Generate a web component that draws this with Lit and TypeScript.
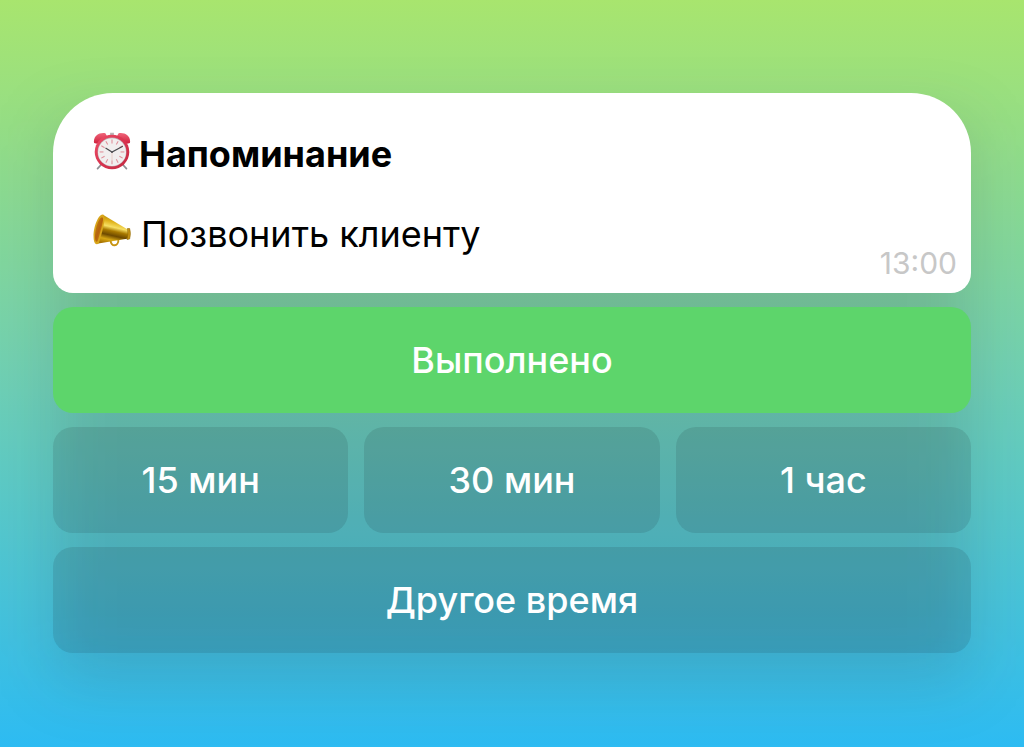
import { LitElement, html, css, svg } from "lit";
import { customElement } from "lit/decorators.js";

const ticks = Array.from({ length: 12 }, (_, i) => i * 30);

const alarmClock = html`
  <svg class="icon" viewBox="0 0 40 40" aria-hidden="true">
    <defs>
      <linearGradient id="bell" x1="0" y1="0" x2="0" y2="1">
        <stop offset="0" stop-color="#f0657a" />
        <stop offset="1" stop-color="#cf1f3c" />
      </linearGradient>
      <linearGradient id="rim" x1="0" y1="0" x2="1" y2="1">
        <stop offset="0" stop-color="#ee5069" />
        <stop offset="0.5" stop-color="#d93450" />
        <stop offset="1" stop-color="#c32a41" />
      </linearGradient>
    </defs>
    <path d="M8.500 34.500 4.800 38.600M31.500 34.500 35.200 38.600" stroke="#8d8f94" stroke-width="1.800" stroke-linecap="round" />
    <path d="M20 0.800v5" stroke="#b9b4b6" stroke-width="4" />
    <path d="M1.200 11.600C-.2 4.600 6 0 13 1.200L14.800 4.400 4.200 12.400Z" fill="url(#bell)" />
    <path d="M38.800 11.600C40.200 4.600 34 0 27 1.200L25.200 4.400 35.800 12.400Z" fill="url(#bell)" />
    <circle cx="20" cy="21" r="18.200" fill="url(#rim)" />
    <circle cx="20" cy="21" r="15.200" fill="#b8a9ae" />
    <circle cx="20" cy="21.200" r="14.700" fill="#f1eeee" />
    ${ticks.map(
      (a) => svg`<path d="M20 8v4" stroke="#e08d98" stroke-width="1.1" transform="rotate(${a} 20 21)" />`
    )}
    <path d="M20 21v10.500" stroke="#e6c4bd" stroke-width="0.800" />
    <path d="M13.200 16.800 20 21 31.400 15" fill="none" stroke="#4a4b4f" stroke-width="1.300" />
    <circle cx="20" cy="21" r="1.100" fill="#55565a" />
  </svg>
`;

const megaphone = html`
  <svg class="icon" viewBox="0 0 40 40" aria-hidden="true">
    <defs>
      <linearGradient id="horn" x1="0.600" y1="0" x2="0.350" y2="1">
        <stop offset="0" stop-color="#a87a00" />
        <stop offset="0.250" stop-color="#e0b31c" />
        <stop offset="0.420" stop-color="#f7df63" />
        <stop offset="0.550" stop-color="#a87900" />
        <stop offset="0.700" stop-color="#6e4a00" />
        <stop offset="0.850" stop-color="#d7a713" />
        <stop offset="1" stop-color="#a67200" />
      </linearGradient>
      <linearGradient id="mouth" x1="0" y1="0" x2="1" y2="1">
        <stop offset="0" stop-color="#c98d0c" />
        <stop offset="0.500" stop-color="#b5620d" />
        <stop offset="1" stop-color="#d99b12" />
      </linearGradient>
    </defs>
    <path d="M18.500 29.500c0 7.600 8.600 7.200 8.200-.6" fill="none" stroke="#c79412" stroke-width="2" />
    <path d="M10.500 3 36.500 18.400 37.400 28 4 33.500Z" fill="url(#horn)" />
    <path d="M36.200 17.400h2.400q1.600 5.200 0 11l-2.800.6q1.600-5.800.4-11.600Z" fill="#c59213" stroke="#8e6500" stroke-width="0.600" />
    <path d="M10.200 2.600C5.200 2.400-.6 18 .8 29.200 1.400 34.600 5.400 35 6.400 32.200 9 24 12 12.600 12.200 6.600 12.200 4 11.400 2.800 10.200 2.600Z" fill="#d8a51a" />
    <path d="M9.500 5.600C6 6 1.600 18.600 2.200 28.200 2.600 32.200 4.600 32 5.200 29.800 7.600 22 10.200 12.800 10.600 8 10.600 6.400 10.200 5.600 9.500 5.600Z" fill="url(#mouth)" />
  </svg>
`;

@customElement("app-root")
export class AppRoot extends LitElement {
  static styles = css`
    :host {
      display: block;
      box-sizing: border-box;
      min-height: 100vh;
      padding: 93px 53px;
      background: linear-gradient(#a8e56e, #70d0b3 50%, #2dbbf2);
      font-family: Inter, "Noto Sans", sans-serif;
      overflow: hidden;
    }
    .message {
      position: relative;
      display: grid;
      gap: 14px;
      isolation: isolate;
    }
    .message::before {
      content: "";
      position: absolute;
      z-index: -1;
      inset: 28px 0 -28px;
      border-radius: 20px;
      background: rgba(50, 30, 40, 0.14);
      filter: blur(32px);
    }
    .card {
      padding: 41px 14px 15px 40px;
      border-radius: 60px 60px 20px 20px;
      background: #fff;
      color: #000;
      font-size: 36px;
      line-height: 40px;
    }
    .title,
    .text {
      display: flex;
      gap: 8px;
      margin: 0;
      font-size: 36px;
      font-weight: 400;
    }
    .title {
      padding-bottom: 40px;
      font-weight: 700;
    }
    .text {
      gap: 10px;
      padding-bottom: 24px;
    }
    .icon {
      flex: none;
      width: 38px;
      height: 38px;
      margin-top: -2px;
    }
    .body {
      display: flex;
      justify-content: space-between;
      align-items: flex-end;
    }
    .time {
      color: #c7c7c7;
      font-size: 30px;
      line-height: 30px;
      font-weight: 400;
    }
    .row {
      display: grid;
      grid-auto-flow: column;
      grid-auto-columns: 1fr;
      gap: 16px;
    }
    .button {
      padding: 33px 16px;
      border: 0;
      border-radius: 20px;
      background: rgba(20, 20, 30, 0.11);
      color: #fff;
      font: 500 36px/40px Inter, "Noto Sans", sans-serif;
      cursor: pointer;
    }
    .done {
      background: #5dd56b;
    }
  `;

  render() {
    return html`
      <main class="message">
        <article class="card">
          <h1 class="title">${alarmClock}<span>Напоминание</span></h1>
          <div class="body">
            <p class="text">${megaphone}<span>Позвонить клиенту</span></p>
            <time class="time" datetime="13:00">13:00</time>
          </div>
        </article>
        <button class="button done" type="button">Выполнено</button>
        <div class="row">
          <button class="button" type="button">15 мин</button>
          <button class="button" type="button">30 мин</button>
          <button class="button" type="button">1 час</button>
        </div>
        <button class="button" type="button">Другое время</button>
      </main>
    `;
  }
}
